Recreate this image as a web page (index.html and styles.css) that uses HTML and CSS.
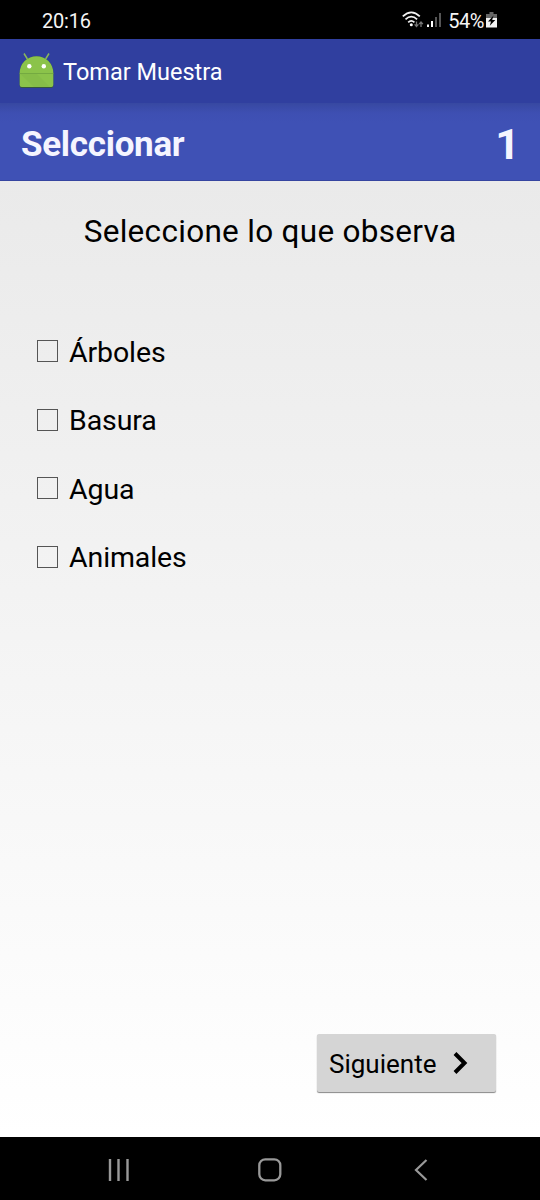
FILE: index.html
```html
<!DOCTYPE html>
<html lang="es">
<head>
<meta charset="utf-8">
<title>Tomar Muestra</title>
<link rel="stylesheet" href="styles.css">
</head>
<body>
<div class="screen">
  <div class="status">
    <span class="clock">20:16</span>
    <div class="indicators">
      <svg class="wifi" width="22" height="18" viewBox="0 0 22 18" fill="none">
        <g stroke="#f2f2f2" stroke-width="1.800"><path d="M.8 5.300Q9.300-2.600 17.800 5.300M3.500 8.300Q9.300 3 15.100 8.300M6.200 11.300Q9.300 8.400 12.400 11.300"/></g>
        <circle cx="9.300" cy="13.700" r="1.500" fill="#fff"/>
        <path d="M14.500 10.500v5M12.600 13.300l1.900 2.200 1.900-2.200M19 16v-5M17.100 13.200l1.900-2.200 1.900 2.200" stroke="#777" stroke-width="1.300"/>
      </svg>
      <svg class="signal" width="15" height="16" viewBox="0 0 15 16"><path fill="#fff" d="M0 12.500h2V15H0zM4 9h2v6H4z"/><path fill="#555" d="M8 5h2v10H8zM12 1h2v14h-2z"/></svg>
      <span class="percent">54%</span>
      <svg class="battery" width="12" height="16" viewBox="0 0 12 16"><path fill="#666" d="M3.500 0h4v2H11v5H0V2h3.500z"/><path fill="#f2f2f2" d="M0 6h11v9.500H0z"/><path fill="#000" d="M7.500 3.500 2 9.500h3l-1.200 4.300L9.300 8H6.200z"/></svg>
    </div>
  </div>
  <header class="appbar">
    <svg class="robot" width="36" height="38" viewBox="0 0 36 38">
      <path d="M5 3.500 9 10M30 3.500 26 10" stroke="#8ab85c" stroke-width="1.500"/>
      <path d="M.7 36V23a16.800 16.800 0 0 1 33.600 0v13q0 2-2 2H2.700q-2 0-2-2z" fill="#34553f"/>
      <path d="M.7 35V23a16.800 16.800 0 0 1 33.600 0v12q0 2-2 2H2.700q-2 0-2-2z" fill="#8bc34a"/>
      <path d="M.7 23h33.600v1H.7z" fill="#74aa41"/>
      <path d="M1.500 24H18l13 13H15z" fill="#7fb546" opacity=".4"/>
      <circle cx="10.300" cy="16.200" r="2.200" fill="#fff"/><circle cx="24.800" cy="16.200" r="2.200" fill="#fff"/>
    </svg>
    <h1 class="title">Tomar Muestra</h1>
  </header>
  <div class="stepbar"><h2 class="step">Selccionar</h2><span class="number">1</span></div>
  <main class="content">
    <p class="prompt">Seleccione lo que observa</p>
    <ul class="options">
      <li class="option"><span class="box"></span><span class="label">Árboles</span></li>
      <li class="option"><span class="box"></span><span class="label">Basura</span></li>
      <li class="option"><span class="box"></span><span class="label">Agua</span></li>
      <li class="option"><span class="box"></span><span class="label">Animales</span></li>
    </ul>
    <button class="next"><span>Siguiente</span><svg width="18" height="26" viewBox="0 0 18 26"><path d="M3 2.500 12.500 12 3 21.500" fill="none" stroke="#000" stroke-width="4"/></svg></button>
  </main>
  <nav class="navbar">
    <svg width="22" height="22" viewBox="0 0 22 22"><path d="M2 0v22M10.500 0v22M19.500 0v22" stroke="#999" stroke-width="2.400"/></svg>
    <svg class="home" width="24" height="24" viewBox="0 0 24 24"><rect x="1.300" y="1.300" width="21" height="21" rx="6" fill="none" stroke="#999" stroke-width="2.300"/></svg>
    <svg width="14" height="22" viewBox="0 0 14 22"><path d="M12.500 1 2 11 12.500 21" fill="none" stroke="#999" stroke-width="2.200"/></svg>
  </nav>
</div>
</body>
</html>
```
FILE: styles.css
```css
* { box-sizing: border-box; margin: 0; padding: 0; }
body { font-family: Roboto, "Liberation Sans", sans-serif; color: #000; }
svg { display: block; flex: none; }
.screen { width: 540px; height: 1200px; display: flex; flex-direction: column; overflow: hidden; }
.status { height: 39px; background: #000; color: #f5f5f5; display: flex; justify-content: space-between; padding: 8px 42px 0; line-height: 26px; }
.clock { font-size: 20px; letter-spacing: -0.2px; }
.indicators { display: flex; }
.wifi { margin-top: 3px; }
.signal { margin: 4px 6px 0 3px; }
.percent { font-size: 20px; letter-spacing: -0.5px; }
.battery { margin: 4px 0 0 2px; }
.appbar { height: 64px; background: #303f9f; display: flex; padding: 11px 0 0 19px; }
.title { color: #fff; font-weight: 400; font-size: 23.5px; line-height: 44px; margin-left: 8px; }
.stepbar { height: 78px; background: linear-gradient(#3748a1 0, #3e4fb2 10px, #3f51b5 20px); border-bottom: 1px solid #3545a0; color: #f5f5ff; display: flex; justify-content: space-between; padding: 0 20px 0 21px; line-height: 82px; }
.step { font-size: 35px; font-weight: 700; letter-spacing: -0.3px; padding-top: 1px; }
.number { font-size: 43px; font-weight: 700; }
.content { flex: 1; background: linear-gradient(#eaeaea, #fff); display: flex; flex-direction: column; }
.prompt { font-size: 31.5px; letter-spacing: 0.3px; line-height: 40px; text-align: center; margin-top: 31px; }
.options { list-style: none; margin: 65px 0 0 37px; }
.option { height: 68.5px; display: flex; align-items: center; gap: 11px; font-size: 28.5px; }
.label { padding-top: 2px; letter-spacing: -0.1px; }
.box { width: 21px; height: 22px; border: 1px solid #555; }
.next { align-self: flex-end; margin: auto 44px 45px 0; width: 179px; height: 58px; border: 0; border-radius: 2px; background: #d5d5d5; box-shadow: 0 1px 1px #888; font: 26px Roboto, sans-serif; color: #000; display: flex; align-items: center; gap: 16px; padding: 2px 0 0 12px; }
.navbar { height: 63px; background: #000; display: flex; justify-content: space-between; align-items: center; padding: 2px 112px 0 108px; }
.home { margin-right: 4px; }
```
